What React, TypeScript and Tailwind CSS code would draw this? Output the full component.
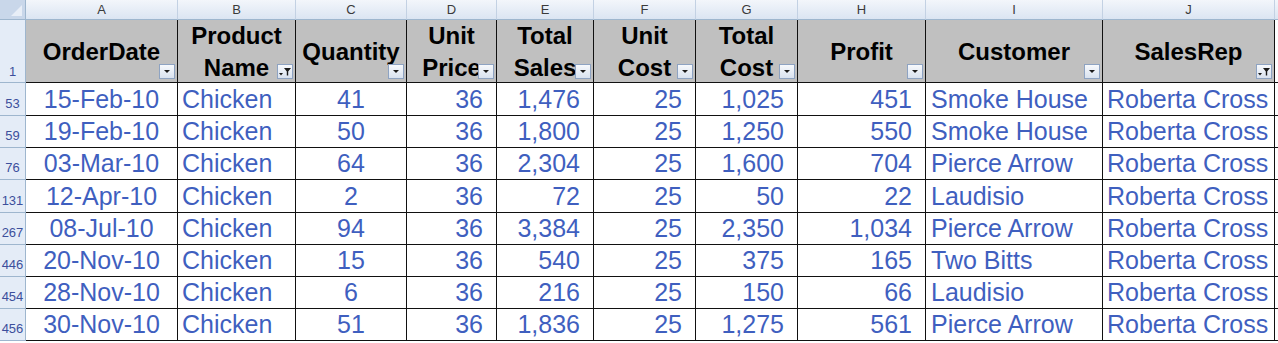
import React from "react";

const cols = ["A", "B", "C", "D", "E", "F", "G", "H", "I", "J"];

type Head = { lines: string[]; filtered?: boolean };

const heads: Head[] = [
  { lines: ["OrderDate"] },
  { lines: ["Product", "Name"], filtered: true },
  { lines: ["Quantity"] },
  { lines: ["Unit", "Price"] },
  { lines: ["Total", "Sales"] },
  { lines: ["Unit", "Cost"] },
  { lines: ["Total", "Cost"] },
  { lines: ["Profit"] },
  { lines: ["Customer"] },
  { lines: ["SalesRep"], filtered: true },
];

const rows = [
  ["53", "15-Feb-10", "Chicken", "41", "36", "1,476", "25", "1,025", "451", "Smoke House", "Roberta Cross"],
  ["59", "19-Feb-10", "Chicken", "50", "36", "1,800", "25", "1,250", "550", "Smoke House", "Roberta Cross"],
  ["76", "03-Mar-10", "Chicken", "64", "36", "2,304", "25", "1,600", "704", "Pierce Arrow", "Roberta Cross"],
  ["131", "12-Apr-10", "Chicken", "2", "36", "72", "25", "50", "22", "Laudisio", "Roberta Cross"],
  ["267", "08-Jul-10", "Chicken", "94", "36", "3,384", "25", "2,350", "1,034", "Pierce Arrow", "Roberta Cross"],
  ["446", "20-Nov-10", "Chicken", "15", "36", "540", "25", "375", "165", "Two Bitts", "Roberta Cross"],
  ["454", "28-Nov-10", "Chicken", "6", "36", "216", "25", "150", "66", "Laudisio", "Roberta Cross"],
  ["456", "30-Nov-10", "Chicken", "51", "36", "1,836", "25", "1,275", "561", "Pierce Arrow", "Roberta Cross"],
];

// alignment per data column A..J
const align = [
  "justify-center",
  "justify-start pl-[4px]",
  "justify-center",
  "justify-end pr-[13px]",
  "justify-end pr-[13px]",
  "justify-end pr-[13px]",
  "justify-end pr-[13px]",
  "justify-end pr-[13px]",
  "justify-start pl-[5px]",
  "justify-start pl-[4px]",
];

const rowH = ["h-[33px]", "h-[32px]", "h-[32px]", "h-[33px]", "h-[32px]", "h-[32px]", "h-[32px]", "h-[32px]"];

const FilterButton = ({ filtered }: { filtered?: boolean }) => (
  <div className="absolute right-[2px] bottom-[3px] w-[16px] h-[15px] border border-[#8ea3c2] bg-gradient-to-b from-[#f7f9fc] to-[#d9e2ef] flex items-center justify-center">
    {filtered ? (
      <svg width="14" height="13" viewBox="0 0 14 13">
        <polygon points="1,8 5,8 3,10.5" fill="#1a1a1a" />
        <polygon points="6,3 13,3 10.2,6.5 10.2,10.5 8.8,10.5 8.8,6.5" fill="#1a1a1a" />
      </svg>
    ) : (
      <svg width="8" height="5" viewBox="0 0 8 5">
        <polygon points="1,1 7,1 4,4" fill="#1a1a1a" />
      </svg>
    )}
  </div>
);

const App = () => {
  return (
    <div className="w-[1278px] h-[343px] bg-white overflow-hidden font-['Liberation_Sans',Arial,sans-serif]">
      <div className="grid grid-cols-[26px_152px_118px_111px_90px_97px_102px_102px_128px_177px_172px_1fr]">
        {/* column letters */}
        <div className="h-[20px] bg-[#c9d7ea] border-r border-b border-[#9eb6ce] relative">
          <svg className="absolute right-[3px] bottom-[3px]" width="11" height="11" viewBox="0 0 11 11">
            <polygon points="11,0 11,11 0,11" fill="#e8eef7" />
          </svg>
        </div>
        {cols.map((c) => (
          <div
            key={c}
            className="h-[20px] bg-gradient-to-b from-[#f3f6fb] to-[#dbe5f2] border-r border-b border-r-[#c3d1e3] border-b-[#9eb6ce] flex items-center justify-center text-[13px] leading-none text-[#3a3a3a]"
          >
            {c}
          </div>
        ))}
        <div className="h-[20px] bg-gradient-to-b from-[#f3f6fb] to-[#dbe5f2] border-b border-[#9eb6ce]" />

        {/* header row */}
        <div className="h-[63px] bg-[#e4ecf7] border-r border-b border-[#9eb6ce] flex items-end justify-center pb-[4px] text-[13px] leading-none text-[#3c4f9c]">
          1
        </div>
        {heads.map((h, i) => (
          <div
            key={i}
            className="h-[63px] relative bg-[#c0c0c0] border-r border-b border-[#111] flex flex-col items-center justify-center pt-[2px] text-[24px] font-bold leading-[32px] text-black"
          >
            {h.lines.map((l) => (
              <span key={l}>{l}</span>
            ))}
            <FilterButton filtered={h.filtered} />
          </div>
        ))}
        <div className="h-[63px] bg-white border-b border-[#111]" />

        {/* data rows */}
        {rows.map((r, ri) => (
          <React.Fragment key={r[0]}>
            <div
              className={`${rowH[ri]} bg-[#e4ecf7] border-r border-b border-[#9eb6ce] flex items-end justify-center pb-[5px] text-[13px] leading-none text-[#3c4f9c]`}
            >
              {r[0]}
            </div>
            {r.slice(1).map((v, ci) => (
              <div
                key={ci}
                className={`${rowH[ri]} ${align[ci]} bg-white border-r border-b border-[#111] flex items-center text-[25px] leading-none text-[#3f5fbf] whitespace-nowrap overflow-hidden`}
              >
                {v}
              </div>
            ))}
            <div className={`${rowH[ri]} bg-white border-b border-[#111]`} />
          </React.Fragment>
        ))}
      </div>
    </div>
  );
};

export default App;
